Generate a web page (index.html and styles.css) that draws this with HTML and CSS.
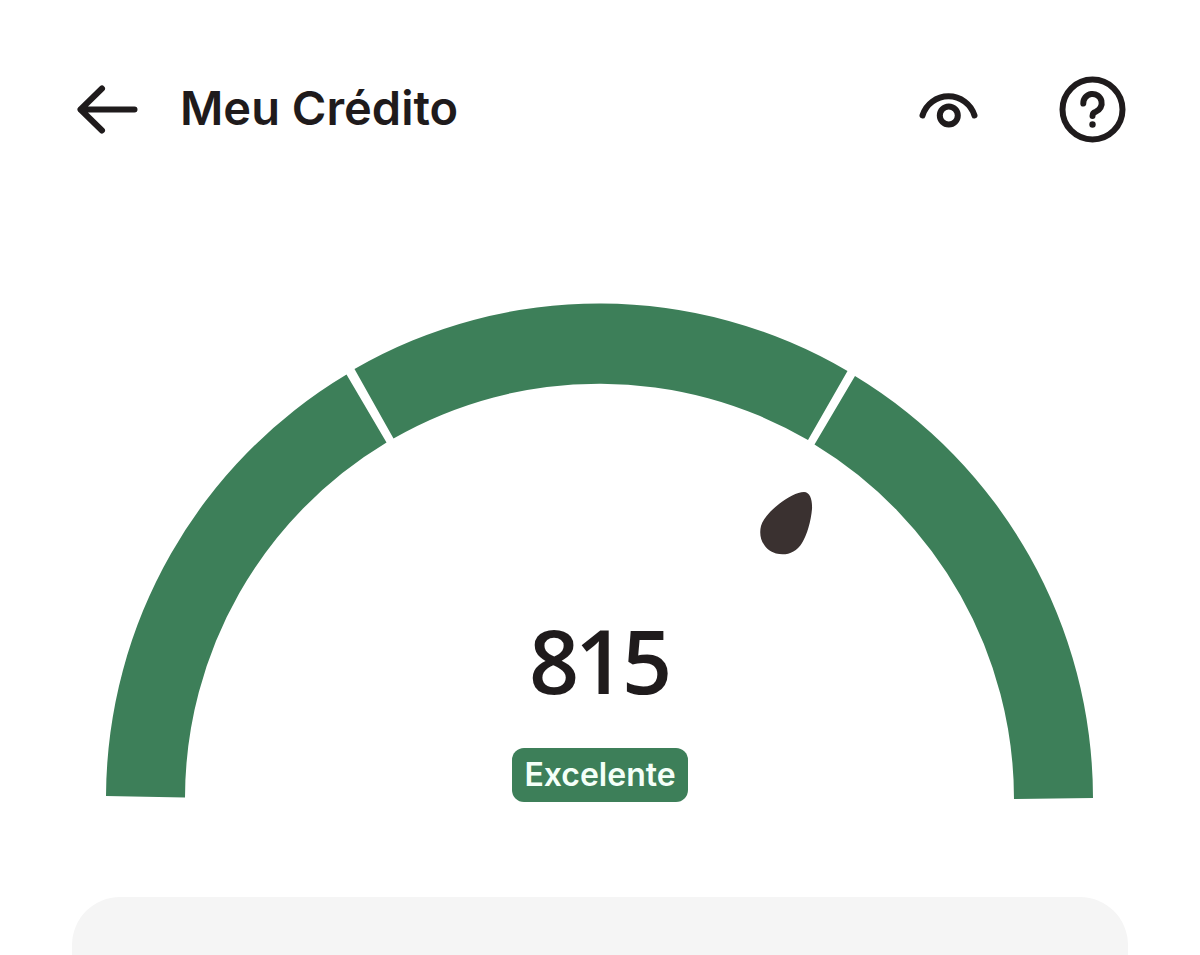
FILE: index.html
```html
<!DOCTYPE html>
<html lang="pt-BR">
<head>
<meta charset="UTF-8">
<meta name="viewport" content="width=device-width, initial-scale=1">
<title>Meu Crédito</title>
<link rel="stylesheet" href="styles.css">
</head>
<body>

    <header class="topbar">
        <button type="button" class="icon-button" aria-label="Voltar">
            <svg class="icon" viewBox="0 0 72 72">
                <path d="M30 15.500L8.500 36.500L30 57.500M8.500 36.500H62.500"/>
            </svg>
        </button>
        <h1 class="title">Meu Crédito</h1>
        <div class="actions">
            <button type="button" class="icon-button" aria-label="Ocultar valores">
                <svg class="icon" viewBox="0 0 72 72">
                    <path d="M10.500 42.500A27.200 27.200 0 0 1 62.500 42.500"/>
                    <circle cx="36.800" cy="42.500" r="9"/>
                </svg>
            </button>
            <button type="button" class="icon-button" aria-label="Ajuda">
                <svg class="icon" viewBox="0 0 72 72">
                    <circle cx="36.500" cy="36.500" r="30"/>
                    <path d="M27.300 30.500A9.200 9.200 0 1 1 39.500 38.800Q36.500 39.500 36.500 43"/>
                    <circle class="dot" cx="36.500" cy="51.500" r="3.200"/>
                </svg>
            </button>
        </div>
    </header>

    <main class="content">
        <section class="score">
            <svg class="gauge" viewBox="72 303 1056 499" aria-hidden="true">
                <g class="arc">
                    <path d="M106 796A494 494 0 0 1 346.500 374.500L386.500 442.500A415 415 0 0 0 185 797.500Z"/>
                    <path d="M354.500 369A490 490 0 0 1 847.500 371L808 440A414 414 0 0 0 393.500 438.500Z"/>
                    <path d="M855 376A494 494 0 0 1 1093 798L1014 799A415 415 0 0 0 814.500 444.500Z"/>
                </g>
                <path class="needle" d="M804 492C810 492 812.500 500 812 509C811 521 807 535 802 543C796 553 786 556 776 553.500C764 550 758 538 761 526C763 519 770 511 779 504C788 497 797 492 804 492Z"/>
            </svg>
            <div class="reading">
                <strong class="value">815</strong>
                <span class="badge">Excelente</span>
            </div>
        </section>

        <section class="card"></section>
    </main>

</body>
</html>
```

FILE: styles.css
```css
* {
    box-sizing: border-box;
}

body {
    margin: 0;
    min-height: 100vh;
    display: flex;
    flex-direction: column;
    background: #fff;
    color: #1f1b1c;
    font-family: Inter, "Liberation Sans", sans-serif;
}

.topbar {
    display: flex;
    align-items: center;
    padding: 73px 72px 0;
}

.icon-button {
    width: 72px;
    height: 72px;
    padding: 0;
    border: 0;
    background: none;
    color: inherit;
    cursor: pointer;
}

.icon {
    display: block;
    width: 100%;
    height: 100%;
    fill: none;
    stroke: currentColor;
    stroke-width: 6;
    stroke-linecap: round;
    stroke-linejoin: round;
}
.icon .dot {
    fill: currentColor;
    stroke: none;
}

.title {
    flex: 1;
    margin: 0 0 2px 36px;
    font-size: 47px;
    font-weight: 600;
    line-height: 60px;
}

.actions {
    display: flex;
    gap: 72px;
}

.content {
    flex: 1;
    display: flex;
    flex-direction: column;
    gap: 95px;
    padding: 158px 72px 0;
}

/* gauge and reading share one cell */
.score {
    display: grid;
}
.gauge,
.reading {
    grid-area: 1 / 1;
}
.gauge {
    display: block;
    width: 100%;
}
.arc {
    fill: #3d7f59;
}
.needle {
    fill: #3a3130;
}

.reading {
    align-self: end;
    display: flex;
    flex-direction: column;
    align-items: center;
    gap: 36px;
}
.value {
    font-family: "Open Sans", "Noto Sans", sans-serif;
    font-size: 88px;
    font-weight: 600;
    font-variant-numeric: proportional-nums;
    line-height: 104px;
}
.badge {
    padding: 0 12px;
    border-radius: 12px;
    background: #3d7f59;
    color: #f4fff8;
    font-size: 32px;
    font-weight: 600;
    line-height: 54px;
}

.card {
    flex: 1;
    min-height: 58px;
    border-radius: 48px 48px 0 0;
    background: #f5f5f5;
}
```
